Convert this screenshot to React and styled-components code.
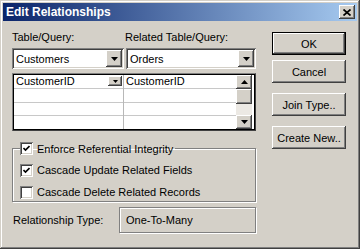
import React from "react";
import styled, { createGlobalStyle } from "styled-components";

const GlobalStyle = createGlobalStyle`
	html, body {
		margin: 0;
		padding: 0;
		background: #d4d0c8;
	}
	* {
		box-sizing: border-box;
	}
`;

const raised = `
	box-shadow: inset -1px -1px #404040, inset 1px 1px #ffffff,
		inset -2px -2px #808080, inset 2px 2px #d4d0c8;
`;

const sunken = `
	box-shadow: inset 1px 1px #808080, inset -1px -1px #ffffff,
		inset 2px 2px #404040, inset -2px -2px #d4d0c8;
`;

const Window = styled.div`
	width: 360px;
	height: 249px;
	padding: 3px;
	background: #d4d0c8;
	font-family: "Liberation Sans", Arial, sans-serif;
	font-size: 11px;
	color: #000;
	box-shadow: inset -1px -1px #404040, inset 1px 1px #d4d0c8,
		inset -2px -2px #808080, inset 2px 2px #ffffff;
	display: flex;
	flex-direction: column;
`;

const TitleBar = styled.div`
	height: 18px;
	display: flex;
	align-items: center;
	justify-content: space-between;
	padding: 0 2px 0 3px;
	background: linear-gradient(to right, #0a246a, #a6caf0);
`;

const Title = styled.span`
	color: #fff;
	font-weight: bold;
	font-size: 12px;
`;

const CloseButton = styled.div`
	width: 16px;
	height: 14px;
	background: #d4d0c8;
	${raised}
	display: flex;
	align-items: center;
	justify-content: center;
`;

const Body = styled.div`
	flex: 1;
	display: flex;
	gap: 16px;
	padding: 10px 0 0 9px;
`;

const LeftPanel = styled.div`
	width: 244px;
	display: flex;
	flex-direction: column;
`;

const LabelRow = styled.div`
	display: flex;
	height: 13px;
	line-height: 13px;
	margin-bottom: 4px;
`;

const Label = styled.div`
	width: ${(p) => p.$width || "auto"};
`;

const ComboRow = styled.div`
	display: flex;
	gap: 2px;
`;

const Combo = styled.div`
	width: ${(p) => p.$width};
	height: 21px;
	background: #fff;
	${sunken}
	display: flex;
	align-items: center;
	padding: 2px;
`;

const ComboText = styled.span`
	flex: 1;
	padding-left: 2px;
`;

const DropButton = styled.div`
	width: ${(p) => p.$w || 16}px;
	height: ${(p) => p.$h || 17}px;
	background: #d4d0c8;
	${raised}
	display: flex;
	align-items: center;
	justify-content: center;
`;

const Arrow = ({ up, size = 7 }) => (
	<svg width={size} height={Math.ceil(size / 2)} viewBox={`0 0 ${size} ${Math.ceil(size / 2)}`}>
		<polygon
			points={
				up
					? `${size / 2},0 ${size},${Math.ceil(size / 2)} 0,${Math.ceil(size / 2)}`
					: `0,0 ${size},0 ${size / 2},${Math.ceil(size / 2)}`
			}
			fill="#000"
		/>
	</svg>
);

const Grid = styled.div`
	margin-top: 4px;
	height: 58px;
	border: 1px solid #808080;
	border-right-color: #404040;
	border-bottom-color: #404040;
	box-shadow: inset 1px 1px #000, inset -1px -1px #000;
	padding: 1px;
	display: flex;
	background: #fff;
`;

const Column = styled.div`
	width: ${(p) => p.$width}px;
	display: flex;
	flex-direction: column;
	border-right: ${(p) => (p.$divider ? "1px solid #b8b8b8" : "none")};
`;

const Cell = styled.div`
	flex: 1;
	display: flex;
	align-items: center;
	justify-content: space-between;
	padding: 0 1px 0 2px;
	border-bottom: ${(p) => (p.$last ? "none" : "1px solid #c8c8c8")};
`;

const ScrollBar = styled.div`
	width: 16px;
	display: flex;
	flex-direction: column;
`;

const ScrollButton = styled.div`
	height: 14px;
	background: #d4d0c8;
	${raised}
	display: flex;
	align-items: center;
	justify-content: center;
`;

const Thumb = styled.div`
	height: 15px;
	background: #d4d0c8;
	${raised}
`;

const Track = styled.div`
	flex: 1;
	background: #ece9e4;
`;

const GroupBox = styled.fieldset`
	margin: 11px 0 0 0;
	padding: 4px 7px 1px;
	border: 1px solid #808080;
	box-shadow: 1px 1px #fff, inset 1px 1px #fff;
	height: 60px;
`;

const Legend = styled.legend`
	padding: 0 2px 0 0;
	margin-left: 0;
	display: flex;
	align-items: center;
	gap: 4px;
`;

const CheckRow = styled.div`
	height: 22px;
	display: flex;
	align-items: center;
	gap: 4px;
`;

const Box = styled.div`
	width: 13px;
	height: 13px;
	background: #fff;
	${sunken}
	display: flex;
	align-items: center;
	justify-content: center;
`;

const Check = ({ checked, label }) => (
	<>
		<Box>
			{checked && (
				<svg width="7" height="7" viewBox="0 0 7 7">
					<polyline points="0.5,3 2.5,5 6.5,1" fill="none" stroke="#000" strokeWidth="1.6" />
				</svg>
			)}
		</Box>
		<span>{label}</span>
	</>
);

const TypeRow = styled.div`
	margin-top: 5px;
	display: flex;
	align-items: center;
	justify-content: space-between;
	padding-left: 1px;
`;

const TypeBox = styled.div`
	width: 137px;
	height: 26px;
	border: 1px solid #808080;
	box-shadow: 1px 1px #fff, inset 1px 1px #fff;
	display: flex;
	align-items: center;
	padding-left: 6px;
`;

const ButtonColumn = styled.div`
	width: 74px;
	display: flex;
	flex-direction: column;
	padding-top: 1px;
`;

const Button = styled.div`
	height: 23px;
	margin-top: ${(p) => p.$gap || 0}px;
	display: flex;
	align-items: center;
	justify-content: center;
	background: #d4d0c8;
	${(p) =>
		p.$default
			? `box-shadow: inset 0 0 0 1px #000, inset -2px -2px #404040, inset 2px 2px #ffffff, inset -3px -3px #808080;`
			: raised}
`;

export default function App() {
	return (
		<>
			<GlobalStyle />
			<Window>
				<TitleBar>
					<Title>Edit Relationships</Title>
					<CloseButton>
						<svg width="8" height="7" viewBox="0 0 8 7">
							<path d="M0.5 0.5 L7.5 6.5 M7.5 0.5 L0.5 6.5" stroke="#000" strokeWidth="1.7" />
						</svg>
					</CloseButton>
				</TitleBar>
				<Body>
					<LeftPanel>
						<LabelRow>
							<Label $width="113px">Table/Query:</Label>
							<Label>Related Table/Query:</Label>
						</LabelRow>
						<ComboRow>
							<Combo $width="112px">
								<ComboText>Customers</ComboText>
								<DropButton>
									<Arrow />
								</DropButton>
							</Combo>
							<Combo $width="130px">
								<ComboText>Orders</ComboText>
								<DropButton>
									<Arrow />
								</DropButton>
							</Combo>
						</ComboRow>
						<Grid>
							<Column $width={110} $divider>
								<Cell>
									<span>CustomerID</span>
									<DropButton $w={14} $h={10}>
										<Arrow size={5} />
									</DropButton>
								</Cell>
								<Cell />
								<Cell />
								<Cell $last />
							</Column>
							<Column $width={112}>
								<Cell>
									<span>CustomerID</span>
								</Cell>
								<Cell />
								<Cell />
								<Cell $last />
							</Column>
							<ScrollBar>
								<ScrollButton>
									<Arrow up />
								</ScrollButton>
								<Thumb />
								<Track />
								<ScrollButton>
									<Arrow />
								</ScrollButton>
							</ScrollBar>
						</Grid>
						<GroupBox>
							<Legend>
								<Check checked label="Enforce Referential Integrity" />
							</Legend>
							<CheckRow>
								<Check checked label="Cascade Update Related Fields" />
							</CheckRow>
							<CheckRow>
								<Check label="Cascade Delete Related Records" />
							</CheckRow>
						</GroupBox>
						<TypeRow>
							<span>Relationship Type:</span>
							<TypeBox>One-To-Many</TypeBox>
						</TypeRow>
					</LeftPanel>
					<ButtonColumn>
						<Button $default>OK</Button>
						<Button $gap={5}>Cancel</Button>
						<Button $gap={10}>Join Type..</Button>
						<Button $gap={10}>Create New..</Button>
					</ButtonColumn>
				</Body>
			</Window>
		</>
	);
}
